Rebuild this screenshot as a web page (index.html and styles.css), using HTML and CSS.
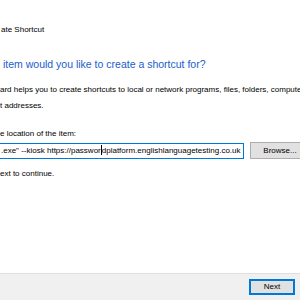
FILE: index.html
```html
<!DOCTYPE html>
<html lang="en">
<head>
  <meta charset="UTF-8">
  <title>Create Shortcut</title>
  <link rel="stylesheet" href="styles.css">
</head>
<body>
  <div class="wizard">
    <div class="wizard-body">
      <div class="title">ate Shortcut</div>
      <h1 class="heading">item would you like to create a shortcut for?</h1>
      <p class="intro">ard helps you to create shortcuts to local or network programs, files, folders, compute<br>t addresses.</p>

      <!-- location row -->
      <label class="label">e location of the item:</label>
      <div class="location-row">
        <div class="field">.exe" --kiosk https://passwor<span class="caret"></span>dplatform.englishlanguagetesting.co.uk</div>
        <div class="btn btn-browse">Browse...</div>
      </div>

      <p class="hint">ext to continue.</p>
    </div>

    <div class="wizard-footer">
      <div class="btn btn-next">Next</div>
    </div>
  </div>
</body>
</html>
```

FILE: styles.css
```css
body {
  margin: 0;
  width: 300px;
  height: 300px;
  overflow: hidden;
  background: #fff;
  font-family: "Liberation Sans", Arial, sans-serif;
  color: #000;
}

.wizard {
  height: 300px;
  display: flex;
  flex-direction: column;
}

.wizard-body {
  flex: 1;
  padding-top: 25px;
  white-space: nowrap;
  overflow: hidden;
}

.title {
  font-size: 8px;
  line-height: 10px;
  padding-left: 1px;
}

.heading {
  margin: 22px 0 0 3px;
  font-size: 10.5px;
  line-height: 14px;
  font-weight: normal;
  color: #2060c8;
}

.intro {
  margin: 11px 0 0;
  font-size: 8px;
  line-height: 16px;
}

.label {
  display: block;
  margin-top: 15px;
  font-size: 8px;
  line-height: 10px;
}

.location-row {
  display: flex;
  align-items: center;
  gap: 6px;
  margin-top: 3px;
  margin-left: -2px;
}

.field {
  width: 246px;
  height: 16px;
  border: 1px solid #0078d7;
  box-sizing: border-box;
  padding-left: 2px;
  font-size: 8px;
  line-height: 14px;
  overflow: hidden;
  flex-shrink: 0;
}

.caret {
  display: inline-block;
  width: 1px;
  height: 10px;
  background: #000;
  vertical-align: -2px;
}

.btn {
  background: #e1e1e1;
  border: 1px solid #adadad;
  box-sizing: border-box;
  font-size: 8px;
  text-align: center;
  flex-shrink: 0;
}

.btn-browse {
  width: 60px;
  height: 17px;
  line-height: 15px;
}

.hint {
  margin: 10px 0 0;
  font-size: 8px;
  line-height: 10px;
}

.wizard-footer {
  height: 26px;
  background: #f0f0f0;
  border-top: 1px solid #dfdfdf;
  display: flex;
  justify-content: flex-end;
  align-items: center;
  padding-right: 5px;
}

.btn-next {
  width: 46px;
  height: 16px;
  line-height: 12px;
  border: 2px solid #0078d7;
}
```
